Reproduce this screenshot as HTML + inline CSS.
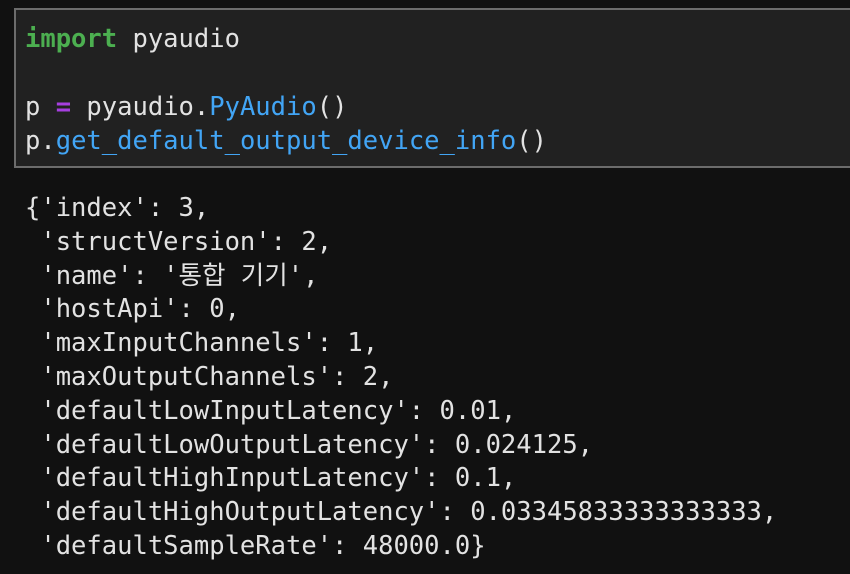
<!DOCTYPE html>
<html><head><meta charset="utf-8"><style>
html,body{margin:0;padding:0;width:850px;height:574px;overflow:hidden;background:#111111;}
pre{margin:0;font-family:"DejaVu Sans Mono","Liberation Mono","Noto Sans CJK KR",monospace;font-size:25.5px;line-height:33.8px;color:#e2e2e2;white-space:pre;}
.box{position:absolute;left:14px;top:8px;width:840px;height:156px;background:#212121;border:2px solid #6c6c6c;box-sizing:content-box;}
.in{position:absolute;left:25px;top:22px;line-height:34px;}
.out{position:absolute;left:25px;top:192px;}
.k{color:#4caf50;font-weight:bold}
.o{color:#a63fe0;font-weight:bold}
.f{color:#42a5f5}
</style></head><body>
<div class="box"></div>
<pre class="in"><span class="k">import</span> pyaudio

p <span class="o">=</span> pyaudio.<span class="f">PyAudio</span>()
p.<span class="f">get_default_output_device_info</span>()</pre>
<pre class="out">{'index': 3,
 'structVersion': 2,
 'name': '통합 기기',
 'hostApi': 0,
 'maxInputChannels': 1,
 'maxOutputChannels': 2,
 'defaultLowInputLatency': 0.01,
 'defaultLowOutputLatency': 0.024125,
 'defaultHighInputLatency': 0.1,
 'defaultHighOutputLatency': 0.03345833333333333,
 'defaultSampleRate': 48000.0}</pre>
</body></html>
